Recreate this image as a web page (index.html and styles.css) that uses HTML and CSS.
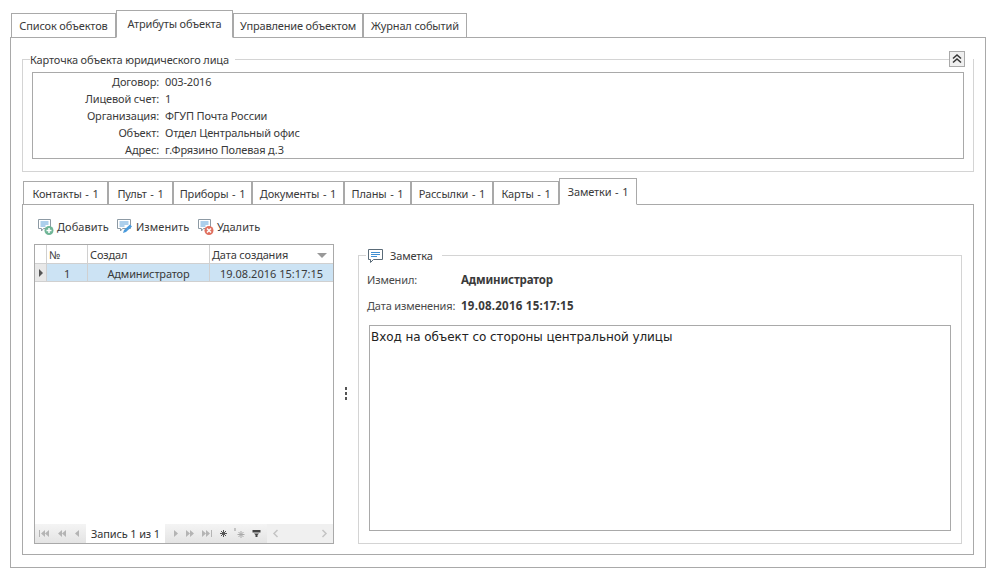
FILE: index.html
```html
<!DOCTYPE html>
<html lang="ru">

<head>
    <meta charset="UTF-8">
    <title>Атрибуты объекта</title>
    <link rel="stylesheet" href="styles.css">
</head>

<body>
    <div class="tabs main-tabs">
        <a class="tab w-list">Список объектов</a>
        <a class="tab active w-attr">Атрибуты объекта</a>
        <a class="tab w-manage">Управление объектом</a>
        <a class="tab w-log">Журнал событий</a>
    </div>

    <div class="main-page">
        <div class="card-group">
            <div class="legend card-legend">
                <span class="legend-text">Карточка объекта юридического лица</span>
                <span class="legend-line"></span>
                <button class="collapse-btn">
                    <svg width="10" height="10" viewBox="0 0 10 10"><path d="M1 4.500 5 1l4 3.500M1 8.500 5 5l4 3.500" fill="none" stroke="#333" stroke-width="1.500"/></svg>
                </button>
            </div>
            <div class="card-info">
                <div class="info-row"><label>Договор:</label><span>003-2016</span></div>
                <div class="info-row"><label>Лицевой счет:</label><span>1</span></div>
                <div class="info-row"><label>Организация:</label><span>ФГУП Почта России</span></div>
                <div class="info-row"><label>Объект:</label><span>Отдел Центральный офис</span></div>
                <div class="info-row"><label>Адрес:</label><span>г.Фрязино Полевая д.3</span></div>
            </div>
        </div>

        <div class="tabs sub-tabs">
            <a class="tab w-contacts">Контакты - 1</a>
            <a class="tab w-panel">Пульт - 1</a>
            <a class="tab w-devices">Приборы - 1</a>
            <a class="tab w-docs">Документы - 1</a>
            <a class="tab w-plans">Планы - 1</a>
            <a class="tab w-mail">Рассылки - 1</a>
            <a class="tab w-maps">Карты - 1</a>
            <a class="tab active w-notes">Заметки - 1</a>
        </div>

        <div class="sub-page">
            <div class="toolbar">
                <a class="tool w-add">
                    <svg width="17" height="18" viewBox="0 0 17 18"><path d="M1.500 1.500h12v9h-7l-2 2.500v-2.500h-3z" fill="#fff" stroke="#8d9aa4"/><path d="M3.500 4h8M3.500 6h8M3.500 8h5" stroke="#5a9fd8"/><circle cx="12" cy="12.500" r="4.500" fill="#6fb596"/><path d="M9.500 12.500h5M12 10v5" stroke="#fff" stroke-width="1.500"/></svg>
                    Добавить
                </a>
                <a class="tool w-edit">
                    <svg width="17" height="18" viewBox="0 0 17 18"><path d="M1.500 1.500h13v9h-8l-2 2.500v-2.500h-3z" fill="#fff" stroke="#8d9aa4"/><path d="M3.500 4h9M3.500 6h9M3.500 8h5" stroke="#5a9fd8"/><path d="m7 15 1-3 6-5.500 2 2-6 5.500z" fill="#4a9bdc"/></svg>
                    Изменить
                </a>
                <a class="tool">
                    <svg width="17" height="18" viewBox="0 0 17 18"><path d="M1.500 1.500h12v9h-7l-2 2.500v-2.500h-3z" fill="#fff" stroke="#8d9aa4"/><path d="M3.500 4h8M3.500 6h8M3.500 8h5" stroke="#5a9fd8"/><circle cx="12" cy="12.500" r="4.500" fill="#e0705f"/><path d="m10 10.500 4 4M14 10.500l-4 4" stroke="#fff" stroke-width="1.500"/></svg>
                    Удалить
                </a>
            </div>

            <div class="work-area">
                <div class="grid">
                    <div class="grid-row grid-head">
                        <div class="cell col-ind"></div>
                        <div class="cell col-num">№</div>
                        <div class="cell col-author">Создал</div>
                        <div class="cell col-date">Дата создания<span class="sort-arrow"></span></div>
                    </div>
                    <div class="grid-row grid-selected">
                        <div class="cell col-ind"><span class="row-arrow"></span></div>
                        <div class="cell col-num center">1</div>
                        <div class="cell col-author center">Администратор</div>
                        <div class="cell col-date center">19.08.2016 15:17:15</div>
                    </div>
                    <div class="grid-empty"></div>
                    <div class="navigator">
                        <div class="nav-buttons nav-left">
                            <svg width="12" height="9" viewBox="0 0 12 9"><path d="M1 1h1v7H1zM7 1v7L3 4.500zM11 1v7L7 4.500z" fill="#b4b4b4"/></svg>
                            <svg width="10" height="9" viewBox="0 0 10 9"><path d="M5 1v7L1 4.500zM9 1v7L5 4.500z" fill="#b4b4b4"/></svg>
                            <svg width="6" height="9" viewBox="0 0 6 9"><path d="M5 1v7L1 4.500z" fill="#b4b4b4"/></svg>
                        </div>
                        <div class="nav-text">Запись 1 из 1</div>
                        <div class="nav-buttons nav-right">
                            <svg width="6" height="9" viewBox="0 0 6 9"><path d="M1 1v7l4-3.500z" fill="#b4b4b4"/></svg>
                            <svg width="10" height="9" viewBox="0 0 10 9"><path d="M1 1v7l4-3.500zM5 1v7l4-3.500z" fill="#b4b4b4"/></svg>
                            <svg width="12" height="9" viewBox="0 0 12 9"><path d="M1 1v7l4-3.500zM5 1v7l4-3.500zM10 1h1v7h-1z" fill="#b4b4b4"/></svg>
                            <svg width="9" height="9" viewBox="0 0 9 9"><path d="M4.500 1v7M1 4.500h7M2 2l5 5M7 2 2 7" stroke="#555"/></svg>
                            <svg width="12" height="11" viewBox="0 0 12 11"><path d="M7 3v7M3.500 6.500h7M4.500 4l5 5M9.500 4l-5 5" stroke="#aaa"/><path d="M1 0v3" stroke="#999"/></svg>
                            <svg width="9" height="9" viewBox="0 0 9 9"><path d="M0.500 1h8v2.500H.5zM2 4.500h5L5.500 6v2h-2V6z" fill="#444"/></svg>
                        </div>
                        <div class="nav-scroll">
                            <svg width="7" height="9" viewBox="0 0 7 9"><path d="M5.500 1 2 4.500 5.500 8" fill="none" stroke="#c4c4c4" stroke-width="1.500"/></svg>
                            <svg width="7" height="9" viewBox="0 0 7 9"><path d="M1.500 1 5 4.500 1.500 8" fill="none" stroke="#c4c4c4" stroke-width="1.500"/></svg>
                        </div>
                    </div>
                </div>

                <div class="splitter"><span></span><span></span><span></span></div>

                <div class="note-group">
                    <div class="legend note-legend">
                        <svg width="17" height="16" viewBox="0 0 17 16"><path d="M1.500 1.500h14v10h-9l-3 3v-3h-2z" fill="#fff" stroke="#5a6b78"/><path d="M4 4.500h9M4 6.500h9M4 8.500h6" stroke="#3f8fd2"/></svg>
                        <span class="legend-text">Заметка</span>
                        <span class="legend-line"></span>
                    </div>
                    <div class="note-row row-changed"><label>Изменил:</label><b>Администратор</b></div>
                    <div class="note-row row-date"><label>Дата изменения:</label><b>19.08.2016 15:17:15</b></div>
                    <div class="note-text">Вход на объект со стороны центральной улицы</div>
                </div>
            </div>
        </div>
    </div>
</body>

</html>
```

FILE: styles.css
```css
* {
    margin: 0;
    padding: 0;
    box-sizing: border-box;
}

body {
    width: 996px;
    height: 578px;
    padding: 10px 10px 0;
    overflow: hidden;
    background-color: #fff;
    font-family: "Noto Sans", sans-serif;
    font-size: 11px;
    letter-spacing: -0.15px;
    color: #3a3a3a;
}

/* tabs */
.tabs {
    display: flex;
    align-items: flex-end;
    position: relative;
    z-index: 1;
    margin-bottom: -1px;
}

.main-tabs {
    height: 28px;
    padding-left: 1px;
}

.sub-tabs {
    height: 25px;
    margin-top: 8px;
    padding-left: 1px;
    word-spacing: 1px;
}

.tab {
    height: 25px;
    line-height: 24px;
    text-align: center;
    white-space: nowrap;
    background-color: #fff;
    border: 1px solid #a9a9a9;
}

.sub-tabs .tab {
    height: 24px;
    line-height: 24px;
}

.tab.active,
.sub-tabs .tab.active {
    height: 28px;
    line-height: 25px;
    border-bottom-color: #fff;
}

.sub-tabs .tab.active {
    height: 27px;
}

.w-list { width: 105px; }
.w-attr { width: 117px; }
.w-manage { width: 130px; }
.w-log { width: 104px; }

.w-contacts { width: 85px; }
.w-panel { width: 65px; }
.w-devices { width: 79px; }
.w-docs { width: 92px; }
.w-plans { width: 67px; }
.w-mail { width: 82px; }
.w-maps { width: 66px; }
.w-notes { width: 78px; }

.main-page {
    width: 976px;
    height: 531px;
    padding: 21px 11px 11px;
    border: 1px solid #a9a9a9;
}

/* card */
.card-group {
    height: 113px;
    padding: 0 9px;
    border: 1px solid #d4d4d4;
    border-top: 0;
}

.legend {
    display: flex;
    align-items: center;
}

.legend-line {
    flex: 1;
    height: 1px;
    background-color: #d4d4d4;
}

.legend-text {
    padding: 0 6px 0 0;
    color: #3a3a3a;
}

.card-legend {
    height: 1px;
    margin: 0 -9px;
}

.card-legend::before,
.note-legend::before {
    content: "";
    width: 7px;
    height: 1px;
    background-color: #d4d4d4;
}

.collapse-btn {
    display: flex;
    align-items: center;
    justify-content: center;
    width: 16px;
    height: 16px;
    margin: 0 8px 2px 0;
    background-color: #efefef;
    border: 1px solid #a9a9a9;
}

.card-info {
    height: 87px;
    margin-top: 12px;
    border: 1px solid #a9a9a9;
}

.info-row {
    display: flex;
    height: 17px;
    line-height: 17px;
}

.info-row label {
    width: 126px;
    text-align: right;
    margin-right: 6px;
}

/* inner page */
.sub-page {
    height: 351px;
    padding: 12px 11px 0;
    border: 1px solid #a9a9a9;
}

.toolbar {
    display: flex;
    align-items: center;
    height: 19px;
    margin-left: 3px;
    letter-spacing: 0.05px;
    line-height: 17px;
}

.tool {
    display: flex;
    align-items: center;
    gap: 3px;
    width: 81px;
}

.tool.w-add { width: 79px; }

.work-area {
    display: flex;
    height: 300px;
    margin-top: 8px;
}

/* grid */
.grid {
    display: flex;
    flex-direction: column;
    width: 300px;
    border: 1px solid #a9a9a9;
}

.grid-row {
    display: flex;
    height: 18px;
    flex: none;
}

.grid-head {
    height: 19px;
}

.grid-head .cell {
    line-height: 20px;
}

.cell {
    padding-left: 2px;
    line-height: 19px;
    border-right: 1px solid #d0d0d0;
    border-bottom: 1px solid #d0d0d0;
}

.cell.center {
    padding-left: 0;
    text-align: center;
}

.col-ind { width: 12px; padding: 0; }
.col-num { width: 41px; }
.col-author { width: 122px; }
.col-date { width: 123px; position: relative; border-right: 0; }

.grid-selected .col-date {
    letter-spacing: 0.02px;
}

.grid-selected .cell {
    background-color: #cce3f4;
}

.grid-selected .col-ind {
    display: flex;
    align-items: center;
    justify-content: center;
    background-color: #e8e8e8;
}

.row-arrow {
    border-left: 4px solid #555;
    border-top: 4px solid transparent;
    border-bottom: 4px solid transparent;
}

.sort-arrow {
    position: absolute;
    right: 6px;
    top: 8px;
    border-top: 5px solid #999;
    border-left: 5px solid transparent;
    border-right: 5px solid transparent;
}

.grid-empty {
    flex: 1;
}

.navigator {
    display: flex;
    align-items: center;
    height: 19px;
    flex: none;
    background: linear-gradient(#f4f4f4, #e4e4e4);
}

.nav-buttons {
    display: flex;
    align-items: center;
}

.nav-left {
    width: 51px;
    gap: 7px;
    padding-left: 3px;
}

.nav-text {
    width: 79px;
    height: 19px;
    line-height: 20px;
    text-align: center;
    background-color: #fff;
    color: #333;
}

.nav-right {
    width: 102px;
    gap: 6px;
    padding-left: 8px;
}

.nav-scroll {
    display: flex;
    justify-content: space-between;
    flex: 1;
    height: 19px;
    align-items: center;
    padding: 0 5px;
    background-color: #f0f0f0;
}

/* splitter */
.splitter {
    display: flex;
    flex-direction: column;
    justify-content: center;
    align-items: center;
    gap: 2px;
    width: 24px;
    padding-bottom: 1px;
}

.splitter span {
    width: 2px;
    height: 3px;
    background-color: #555;
}

/* note */
.note-group {
    width: 604px;
    height: 289px;
    margin-top: 11px;
    padding: 0 10px;
    border: 1px solid #d4d4d4;
    border-top: 0;
}

.note-legend {
    height: 1px;
    margin: 0 -10px;
}

.note-legend svg {
    margin-left: 1px;
}

.note-legend .legend-text {
    padding: 0 9px 0 6px;
}

.note-row {
    display: flex;
    margin-left: -2px;
    height: 14px;
    line-height: 14px;
    white-space: nowrap;
}

.note-row label {
    width: 94px;
    color: #4a4a4a;
}

.note-row b {
    font-size: 11.5px;
}

.row-changed { margin-top: 17px; }
.row-date { margin-top: 12px; }
.row-date b { letter-spacing: 0.25px; }

.note-text {
    height: 206px;
    margin-top: 12px;
    padding: 3px 1px;
    border: 1px solid #a9a9a9;
    font-family: "DejaVu Sans", sans-serif;
    font-size: 12px;
    letter-spacing: -0.07px;
    line-height: 16px;
    color: #222;
}
```
